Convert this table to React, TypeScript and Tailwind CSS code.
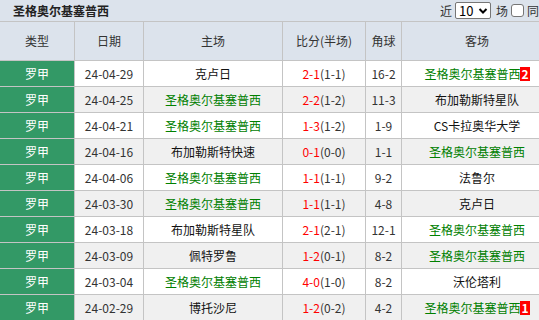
import React from "react";

type Row = {
  date: string;
  home: string;
  homeG?: boolean;
  score: string;
  half: string;
  corner: string;
  away: string;
  awayG?: boolean;
  badge?: string;
};

const rows: Row[] = [
  { date: "24-04-29", home: "克卢日", score: "2-1", half: "(1-1)", corner: "16-2", away: "圣格奥尔基塞普西", awayG: true, badge: "2" },
  { date: "24-04-25", home: "圣格奥尔基塞普西", homeG: true, score: "2-2", half: "(1-2)", corner: "11-3", away: "布加勒斯特星队" },
  { date: "24-04-21", home: "圣格奥尔基塞普西", homeG: true, score: "1-3", half: "(1-2)", corner: "1-9", away: "CS卡拉奥华大学" },
  { date: "24-04-16", home: "布加勒斯特快速", score: "0-1", half: "(0-0)", corner: "1-1", away: "圣格奥尔基塞普西", awayG: true },
  { date: "24-04-06", home: "圣格奥尔基塞普西", homeG: true, score: "1-1", half: "(1-1)", corner: "9-2", away: "法鲁尔" },
  { date: "24-03-30", home: "圣格奥尔基塞普西", homeG: true, score: "1-1", half: "(1-1)", corner: "4-8", away: "克卢日" },
  { date: "24-03-18", home: "布加勒斯特星队", score: "2-1", half: "(2-1)", corner: "12-1", away: "圣格奥尔基塞普西", awayG: true },
  { date: "24-03-09", home: "佩特罗鲁", score: "1-2", half: "(0-1)", corner: "8-2", away: "圣格奥尔基塞普西", awayG: true },
  { date: "24-03-04", home: "圣格奥尔基塞普西", homeG: true, score: "4-0", half: "(1-0)", corner: "8-2", away: "沃伦塔利" },
  { date: "24-02-29", home: "博托沙尼", score: "1-2", half: "(0-2)", corner: "4-2", away: "圣格奥尔基塞普西", awayG: true, badge: "1" },
];

const grid = "grid grid-cols-[75px_69px_139px_83px_36px_151px]";
const cell = "flex items-center justify-center border-r border-[#c4c4c4]";

export default function App() {
  return (
    <div
      className="w-[539px] h-[320px] overflow-hidden bg-white text-[12px] text-[#333]"
      style={{ fontFamily: '"Noto Sans CJK SC", "Noto Sans", sans-serif' }}
    >
      <div className="w-[553px]">
        <div className="flex items-center h-[22px] border-b border-[#c4c4c4] bg-[#dce3ec] whitespace-nowrap">
          <div className="w-[440px] shrink-0 pl-[13px] font-bold text-[12px] text-[#222]">圣格奥尔基塞普西</div>
          <span className="shrink-0">近</span>
          <div className="shrink-0 ml-[3px] flex items-center justify-between w-[36px] h-[17px] bg-white border border-[#767676] rounded-[2px] pl-[3px] pr-[2px] text-[13px] text-black">
            <span>10</span>
            <svg width="10" height="8" viewBox="0 0 10 8">
              <path d="M1.5 2 L5 5.5 L8.5 2" fill="none" stroke="#000" strokeWidth="2" />
            </svg>
          </div>
          <span className="shrink-0 ml-[5px]">场</span>
          <div className="shrink-0 ml-[3px] w-[13px] h-[13px] bg-white border border-[#767676] rounded-[3px]" />
          <span className="shrink-0 ml-[3px]">同主客</span>
        </div>
        <div className={`${grid} h-[39px] border-b border-[#c4c4c4] bg-[#dce3ec]`}>
          <div className={cell}>类型</div>
          <div className={cell}>日期</div>
          <div className={cell}>主场</div>
          <div className={cell}>比分(半场)</div>
          <div className={cell}>角球</div>
          <div className={cell}>客场</div>
        </div>
        {rows.map((r, i) => (
          <div
            key={i}
            className={`${grid} h-[26px] border-b border-[#c4c4c4] ${i % 2 === 0 ? "bg-white" : "bg-[#f0f0f0]"}`}
          >
            <div className={`${cell} bg-[#339966] text-white`}>罗甲</div>
            <div className={cell}>{r.date}</div>
            <div className={`${cell} ${r.homeG ? "text-[#008000]" : "text-[#111]"}`}>{r.home}</div>
            <div className={cell}>
              <span className="text-[#ff0000]">{r.score}</span>
              <span>{r.half}</span>
            </div>
            <div className={cell}>{r.corner}</div>
            <div className={`${cell} ${r.awayG ? "text-[#008000]" : "text-[#111]"}`}>
              <span>{r.away}</span>
              {r.badge && (
                <span className="bg-[#ff0000] text-white font-bold leading-[14px] px-[1px]">{r.badge}</span>
              )}
            </div>
          </div>
        ))}
      </div>
    </div>
  );
}
